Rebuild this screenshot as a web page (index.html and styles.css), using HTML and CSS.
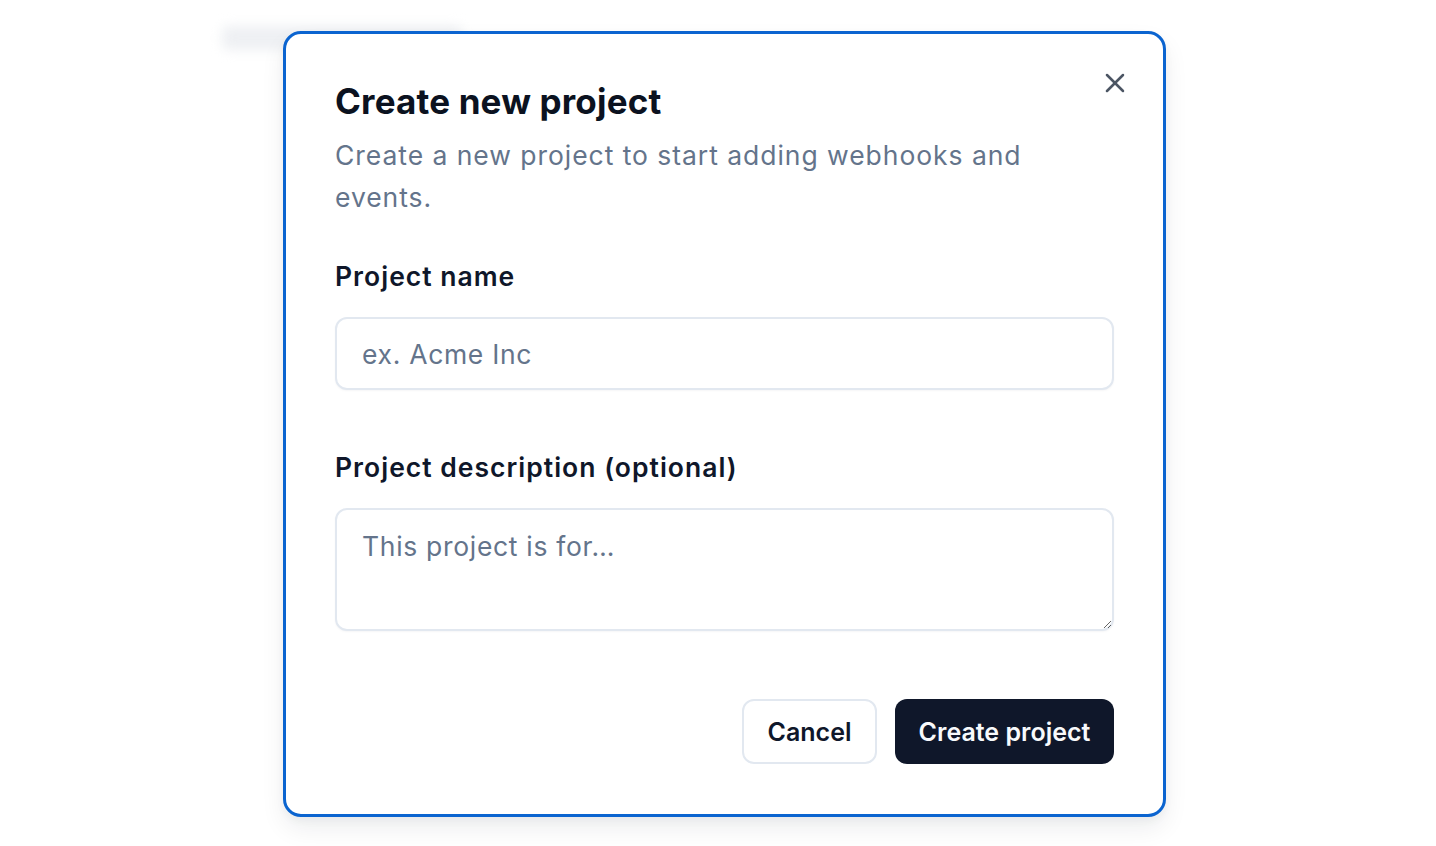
FILE: index.html
```html
<!DOCTYPE html>
<html lang="en">
<head>
<meta charset="utf-8">
<title>Create new project</title>
<link rel="stylesheet" href="styles.css">
</head>
<body>
<div class="stage">
  <div class="ghost"></div>
  <div class="dialog">
    <button class="close" aria-label="Close">
      <svg width="32" height="32" viewBox="0 0 24 24" fill="none" stroke="currentColor" stroke-width="1.9" stroke-linecap="round" stroke-linejoin="round"><path d="M18 6 6 18"/><path d="m6 6 12 12"/></svg>
    </button>
    <div class="header">
      <h2 class="title">Create new project</h2>
      <p class="desc">Create a new project to start adding webhooks and events.</p>
    </div>
    <div class="field">
      <label class="label">Project name</label>
      <input class="input" type="text" placeholder="ex. Acme Inc">
    </div>
    <div class="field field-2">
      <label class="label">Project description (optional)</label>
      <textarea class="textarea" placeholder="This project is for…"></textarea>
    </div>
    <div class="footer">
      <button class="btn btn-outline">Cancel</button>
      <button class="btn btn-primary">Create project</button>
    </div>
  </div>
</div>
</body>
</html>
```

FILE: styles.css
```css
* { box-sizing: border-box; }
html, body { margin: 0; padding: 0; background: #ffffff; }
body {
  font-family: Inter, "Noto Sans", "Liberation Sans", sans-serif;
  color: #0f172a;
  width: 1436px;
  height: 846px;
  overflow: hidden;
}
.stage {
  position: relative;
  padding: 31px 0 0 283px;
}
.ghost {
  position: absolute;
  left: 222px;
  top: 26px;
  width: 240px;
  height: 24px;
  background: #eef0f3;
  filter: blur(6px);
  border-radius: 6px;
}
.dialog {
  position: relative;
  width: 883px;
  height: 786px;
  background: #ffffff;
  border: 3px solid #0b64d0;
  border-radius: 18px;
  padding: 47px 49px 50px 49px;
  display: flex;
  flex-direction: column;
  box-shadow: 0 12px 24px rgba(15, 23, 42, 0.07), 0 4px 8px rgba(15, 23, 42, 0.04);
}
.close {
  position: absolute;
  top: 32px;
  right: 31px;
  width: 34px;
  height: 34px;
  padding: 0;
  border: 0;
  background: transparent;
  color: #4b5563;
  display: flex;
  align-items: center;
  justify-content: center;
}
.title {
  margin: 0;
  font-size: 35px;
  line-height: 40px;
  font-weight: 700;
  letter-spacing: 0.005em;
  color: #0b1220;
}
.desc {
  margin: 13px 0 0 0;
  font-size: 26.5px;
  line-height: 42px;
  color: #64748b;
  letter-spacing: 0.036em;
}
.field {
  display: flex;
  flex-direction: column;
  gap: 23px;
  margin-top: 40px;
}
.field-2 { margin-top: 59px; }
.label {
  font-size: 26.5px;
  line-height: 36px;
  font-weight: 600;
  color: #0f172a;
  letter-spacing: 0.038em;
}
.input, .textarea {
  width: 100%;
  border: 2px solid #e2e8f0;
  border-radius: 12px;
  background: #ffffff;
  font-family: inherit;
  font-size: 26.5px;
  color: #0f172a;
  padding: 0 25px;
  outline: none;
  letter-spacing: 0.026em;
  box-shadow: 0 1px 2px rgba(15, 23, 42, 0.04);
}
.input { height: 73px; }
.textarea {
  height: 123px;
  padding-top: 18px;
  line-height: 36px;
  resize: vertical;
}
.input::placeholder, .textarea::placeholder { color: #64748b; opacity: 1; }
.footer {
  margin-top: auto;
  display: flex;
  justify-content: flex-end;
  gap: 18px;
}
.btn {
  height: 65px;
  border-radius: 12px;
  font-family: inherit;
  font-size: 25px;
  font-weight: 600;
  padding: 0;
  white-space: nowrap;
  cursor: pointer;
  letter-spacing: 0;
}
.btn-outline {
  background: #ffffff;
  border: 2px solid #e2e8f0;
  color: #0f172a;
  width: 135px;
}
.btn-primary {
  background: #0f172a;
  border: 0;
  color: #f8fafc;
  width: 219px;
}
```
